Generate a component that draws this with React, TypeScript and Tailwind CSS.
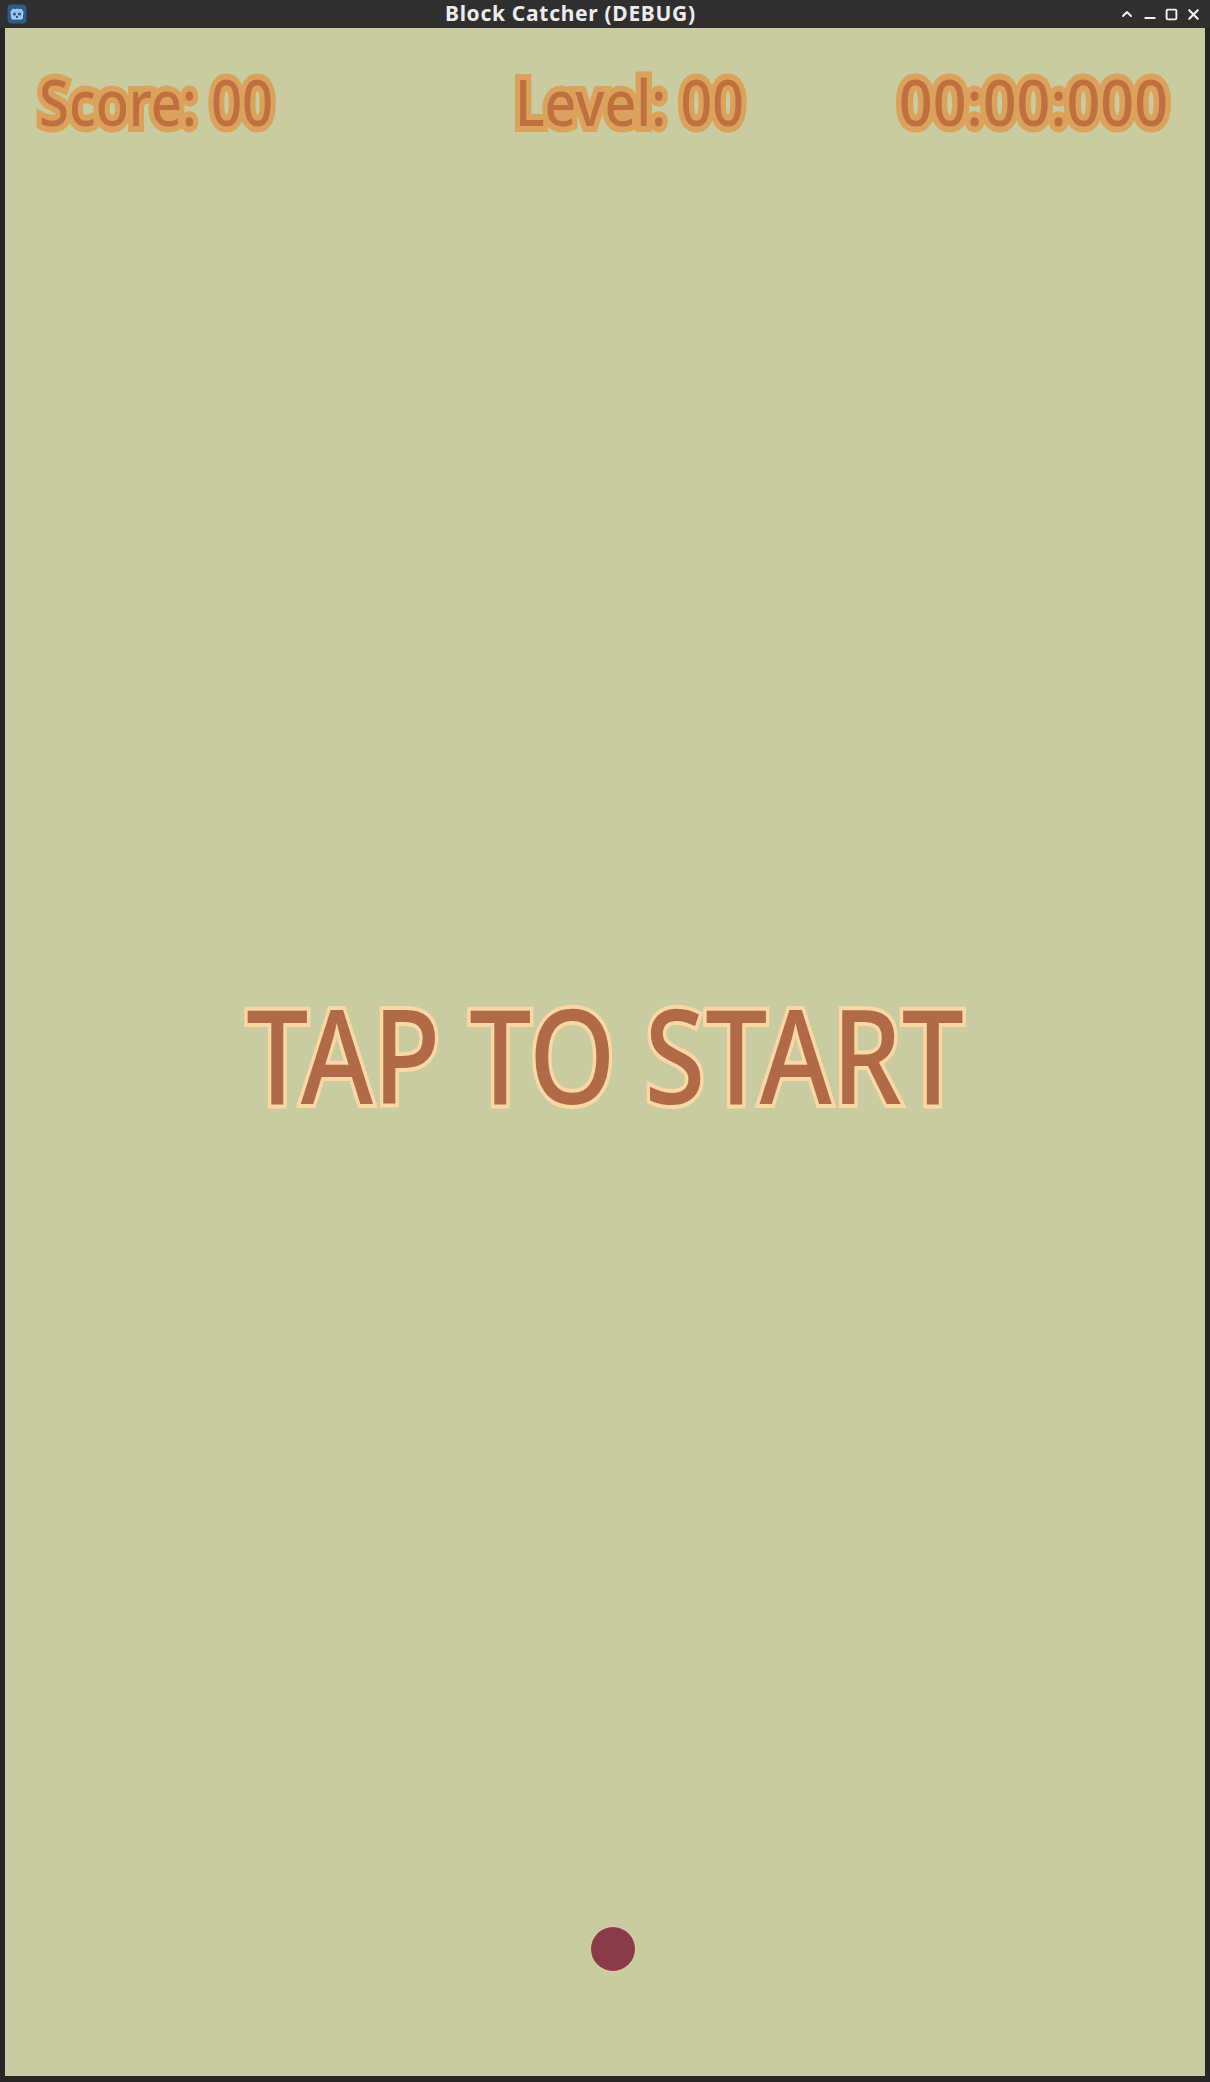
import { ChevronUp, Minus, Square, X } from "lucide-react";

const hudText =
  "font-['Noto_Sans',sans-serif] font-medium text-[64px] leading-none whitespace-nowrap text-[#c06f3e] [-webkit-text-stroke:12px_#dba25c] [paint-order:stroke_fill]";

const GodotIcon = () => (
  <svg width="20" height="20" viewBox="0 0 20 20">
    <rect x="0.5" y="0.5" width="19" height="19" rx="4" fill="#2d5d8f" />
    <path
      d="M4 8 L6 5 L8 6 L10 5 L12 6 L14 5 L16 8 L15 15 L5 15 Z"
      fill="#8fc4ef"
      stroke="#cfe7ff"
      strokeWidth="0.8"
    />
    <circle cx="7.5" cy="10" r="1.6" fill="#2d5d8f" />
    <circle cx="12.5" cy="10" r="1.6" fill="#2d5d8f" />
    <rect x="9" y="12" width="2" height="2" fill="#2d5d8f" />
  </svg>
);

export default function App() {
  return (
    <div className="w-[1210px] h-[2082px] bg-[#262626] flex flex-col font-['Noto_Sans',sans-serif]">
      {/* Window title bar */}
      <div className="h-[28px] shrink-0 bg-[#2f2f2f] flex items-center relative">
        <div className="pl-[7px]">
          <GodotIcon />
        </div>
        <div className="absolute left-[445px] top-0 h-full flex items-center text-[21px] tracking-[0.7px] font-bold text-[#ececec] font-['Noto_Sans',sans-serif]">
          Block Catcher (DEBUG)
        </div>
        <div className="ml-auto flex items-center gap-[7px] pr-[8px] text-[#f2f2f2]">
          <ChevronUp size={16} strokeWidth={3} />
          <Minus size={16} strokeWidth={3} className="translate-y-[4px]" />
          <Square size={13} strokeWidth={3.5} />
          <X size={17} strokeWidth={3} />
        </div>
      </div>

      {/* Game viewport */}
      <div className="flex-1 mx-[5px] mb-[6px] bg-[#c9cca1] flex flex-col">
        <div className="flex items-start pt-[42px] pl-[34px] pr-[37px]">
          <div className="w-[476px] shrink-0">
            <div className={`${hudText} inline-block origin-left scale-x-[0.85]`}>Score: 00</div>
          </div>
          <div className="shrink-0">
            <div className={`${hudText} inline-block origin-left scale-x-[0.865]`}>Level: 00</div>
          </div>
          <div className="ml-auto shrink-0">
            <div className={`${hudText} inline-block origin-right scale-x-[0.925]`}>00:00:000</div>
          </div>
        </div>

        <div className="mt-[855px] flex justify-center">
          <div className="inline-block origin-center scale-x-[0.85] font-['Noto_Sans',sans-serif] font-medium text-[130px] leading-none whitespace-nowrap text-[#b16a48] [-webkit-text-stroke:8px_#fad7a3] [paint-order:stroke_fill]">
            TAP TO START
          </div>
        </div>

        <div className="mt-[808px] ml-[586px] w-[44px] h-[44px] rounded-full bg-[#8a3b49] ring-1 ring-[#e8c9a2]/60" />
      </div>
    </div>
  );
}
